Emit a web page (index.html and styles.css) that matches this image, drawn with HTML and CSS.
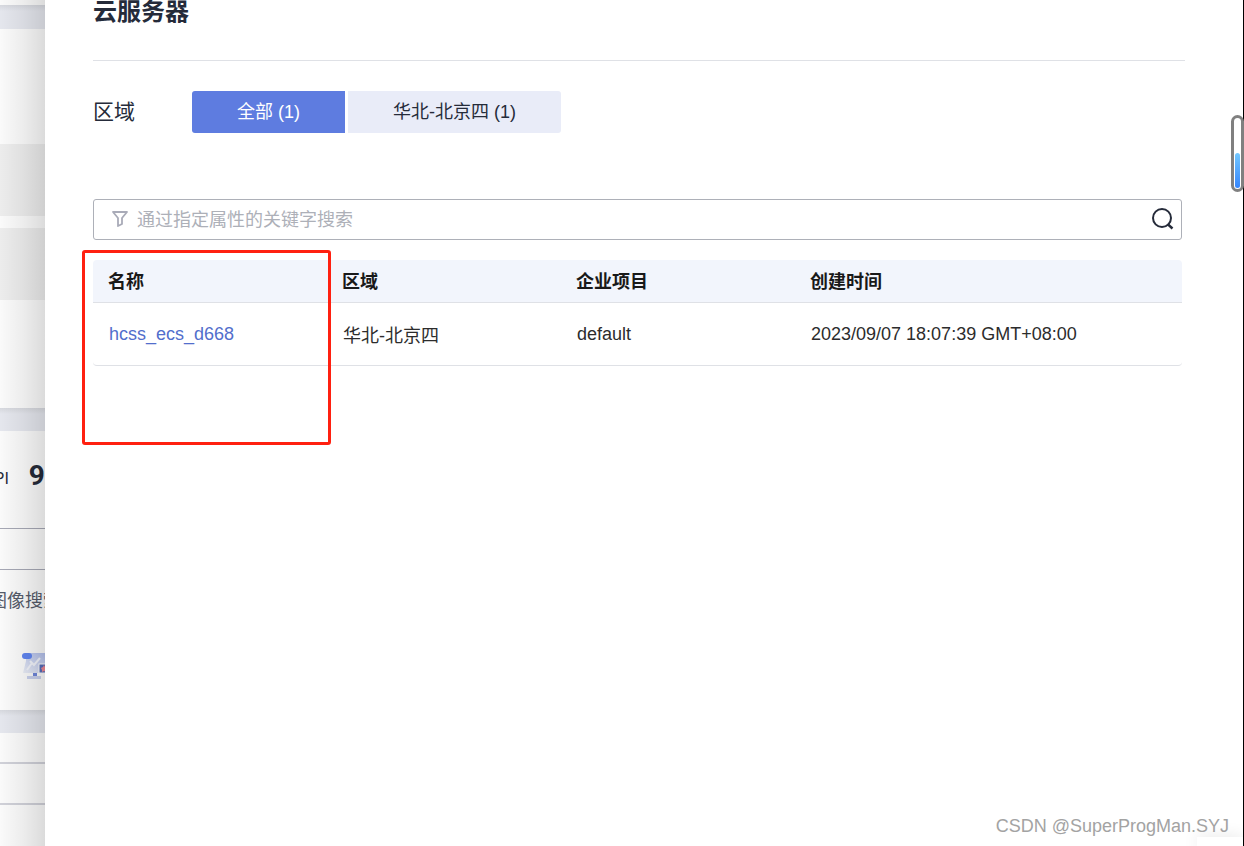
FILE: index.html
```html
<!DOCTYPE html>
<html lang="zh-CN">
<head>
<meta charset="utf-8">
<title>云服务器</title>
<link rel="stylesheet" href="styles.css">
</head>
<body>
<div class="app">
  <aside class="backdrop">
    <div class="band band-top"></div>
    <div class="panel panel-list">
      <div class="tile"></div>
      <div class="tile"></div>
    </div>
    <div class="band"></div>
    <div class="panel panel-api">
      <div class="stat"><span class="stat-label">API</span><strong class="stat-value">93</strong></div>
      <div class="divider-row"></div>
      <p class="topic">图像搜索</p>
      <svg class="thumb" width="36" height="28" viewBox="0 0 36 28" aria-hidden="true">
        <defs><linearGradient id="screen" x1="0" y1="1" x2="1" y2="0"><stop offset="0" stop-color="#eef1fa"/><stop offset="1" stop-color="#a8b8ee"/></linearGradient></defs>
        <path d="M4 1h32v20H1l3-12z" fill="url(#screen)"/>
        <rect x="0" y="1" width="10" height="6" rx="3" fill="#6287f4"/>
        <path d="M8 9l4 4 6-7M5 18l5-7" fill="none" stroke="#f6f8ff" stroke-width="2"/>
        <path d="M11 21h4v3h-4z" fill="#7188dd"/>
        <path d="M5 24h14v3H5z" fill="#ccd4f0"/>
        <rect x="17" y="12" width="18" height="9" fill="#5870bd" stroke="#fff"/>
        <path d="M22 13l1 2 3 1-2 2v2l-2-1-2 1v-2l-1-2 2-1z" fill="#f28b96"/>
      </svg>
    </div>
    <div class="band"></div>
    <div class="panel panel-rows">
      <div class="slot slot-first"></div>
      <div class="slot"></div>
    </div>
  </aside>

  <main class="drawer">
    <h1 class="title">云服务器</h1>
    <section class="filter">
      <span class="filter-label">区域</span>
      <div class="tabs">
        <button class="tab tab-active" type="button">全部 (1)</button>
        <button class="tab tab-wide" type="button">华北-北京四 (1)</button>
      </div>
    </section>
    <section class="content">
      <form class="search">
        <svg class="filter-icon" width="18" height="18" viewBox="0 0 18 18" aria-hidden="true"><path d="M2 1h14l-5 6v6l-4 2V7z" fill="none" stroke="#a9abb8" stroke-width="1.8" stroke-linejoin="round"/></svg>
        <input class="search-input" type="text" aria-label="搜索" placeholder="通过指定属性的关键字搜索">
        <button class="search-button" type="button" aria-label="搜索">
          <svg width="24" height="24" viewBox="0 0 24 24" aria-hidden="true"><circle cx="12" cy="10" r="9" fill="none" stroke="#252b3a" stroke-width="2"/><path d="M17.500 16l5 4.500" stroke="#252b3a" stroke-width="2.400"/></svg>
        </button>
      </form>
      <div class="table-wrap">
        <table class="servers">
          <thead>
            <tr><th class="col">名称</th><th class="col">区域</th><th class="col">企业项目</th><th>创建时间</th></tr>
          </thead>
          <tbody>
            <tr><td><a class="link" href="#">hcss_ecs_d668</a></td><td>华北-北京四</td><td>default</td><td>2023/09/07 18:07:39 GMT+08:00</td></tr>
          </tbody>
        </table>
        <div class="highlight"></div>
      </div>
    </section>
    <div class="gauge"><div class="gauge-fill"></div></div>
    <div class="corner"></div>
    <div class="watermark">CSDN @SuperProgMan.SYJ</div>
  </main>
</div>
</body>
</html>
```
FILE: styles.css
```css
* {
  box-sizing: border-box;
}

body {
  margin: 0;
  font-family: "Liberation Sans", "Noto Sans CJK SC", sans-serif;
  font-size: 18px;
  color: #191919;
  background: #fff;
}

button,
input {
  font: inherit;
}

.app {
  display: flex;
  height: 100vh;
  overflow: hidden;
}

/* Page behind the drawer */
.backdrop {
  position: relative;
  flex: none;
  display: flex;
  flex-direction: column;
  width: 45px;
  overflow: hidden;
}

.backdrop::after {
  content: "";
  position: absolute;
  inset: 0;
  background: linear-gradient(to right, rgba(0, 0, 0, 0.02), rgba(0, 0, 0, 0.07) 50%, rgba(0, 0, 0, 0.14));
}

.band {
  flex: none;
  height: 23px;
  background: linear-gradient(#dadce2, #e9ebf2 6px);
}

.band-top {
  margin-top: 5px;
  height: 24px;
}

.panel {
  flex: none;
}

.panel-list {
  display: flex;
  flex-direction: column;
  gap: 12px;
  padding: 115px 0 108px;
}

.tile {
  height: 72px;
  background: #f1f1f1;
}

.stat {
  display: flex;
  align-items: center;
  justify-content: flex-end;
  gap: 20px;
  width: 61px;
  height: 97px;
  padding-bottom: 8px;
  color: #252b3a;
}

.stat-label {
  font-size: 16px;
  padding-top: 6px;
}

.stat-value {
  font-family: Roboto, sans-serif;
  font-size: 28px;
}

.divider-row {
  height: 42px;
  border: solid #a9abb8;
  border-width: 1px 0;
}

.topic {
  margin: 17px 0 0 -11px;
  line-height: 28px;
  white-space: nowrap;
  color: #575d6c;
}

.thumb {
  display: block;
  margin: 37px 0 30px 22px;
}

.slot {
  height: 41px;
  border-bottom: 2px solid #d3d4dc;
}

.slot-first {
  height: 31px;
}

/* Drawer */
.drawer {
  position: relative;
  flex: 1;
  min-width: 0;
  padding: 0 58px 0 48px;
  border-right: 1px solid #000;
  background: #fff;
}

.title {
  margin: 0;
  height: 61px;
  border-bottom: 1px solid #dfe1e6;
  font-size: 24px;
  line-height: 24px;
  color: #252b3a;
}

.filter {
  display: flex;
  align-items: center;
  gap: 57px;
  padding: 30px 0 66px;
}

.filter-label {
  padding-bottom: 4px;
  font-size: 21px;
  color: #252b3a;
}

.tabs {
  display: flex;
  gap: 3px;
}

.tab {
  width: 153px;
  height: 42px;
  padding: 0 0 4px;
  border: 0;
  border-radius: 0 3px 3px 0;
  background: #e9ecf8;
  color: #252b3a;
}

.tab-wide {
  width: 213px;
}

.tab-active {
  border-radius: 3px 0 0 3px;
  background: #5e7ce0;
  color: #fff;
}

.content {
  padding-right: 3px;
}

.search {
  display: flex;
  align-items: center;
  height: 41px;
  padding: 0 7px 0 17px;
  border: 1px solid #adb0b8;
  border-radius: 3px;
}

.filter-icon {
  flex: none;
}

.search-input {
  flex: 1;
  min-width: 0;
  padding: 2px 0 0 8px;
  border: 0;
  outline: 0;
  background: transparent;
}

.search-input::placeholder {
  color: #adb0b8;
}

.search-button {
  display: flex;
  padding: 0;
  border: 0;
  background: transparent;
}

.table-wrap {
  position: relative;
  margin-top: 20px;
}

.servers {
  width: 100%;
  table-layout: fixed;
  border-collapse: separate;
  border-spacing: 0;
  text-align: left;
}

.servers th {
  height: 43px;
  padding: 0 15px 2px;
  border-bottom: 1px solid #dfe1e6;
  background: #f2f5fc;
}

.servers th:first-child {
  border-top-left-radius: 4px;
}

.servers th:last-child {
  border-top-right-radius: 4px;
}

.servers .col {
  width: 234px;
}

.servers td {
  height: 63px;
  padding: 0 16px;
  border-bottom: 1px solid #dfe1e6;
  color: #2c2c2c;
}

.servers td:first-child {
  border-bottom-left-radius: 4px;
}

.servers td:last-child {
  border-bottom-right-radius: 4px;
}

.link {
  color: #526ecc;
  text-decoration: none;
}

.highlight {
  position: absolute;
  top: -10px;
  left: -11px;
  width: 249px;
  height: 195px;
  border: 3px solid #ff2010;
  border-radius: 3px;
  pointer-events: none;
}

.gauge {
  position: absolute;
  top: 115px;
  right: -1px;
  display: flex;
  align-items: flex-end;
  width: 13px;
  height: 77px;
  padding: 1px;
  border: 3px solid #808080;
  border-radius: 7px;
  background: #fff;
}

.gauge-fill {
  width: 5px;
  height: 35px;
  border-radius: 3px;
  background: linear-gradient(#73c8ff, #3585fb);
}

.corner {
  position: absolute;
  right: 0;
  bottom: 0;
  width: 46px;
  height: 9px;
  background: #fff;
  box-shadow: 0 0 16px rgba(0, 0, 0, 0.12);
  clip-path: inset(-16px 0 0 -16px);
}

.watermark {
  position: absolute;
  right: 14px;
  bottom: 8px;
  font-size: 18px;
  line-height: 24px;
  color: #a3a3a3;
  text-shadow: -1px -1px 0 #fff;
}
```
